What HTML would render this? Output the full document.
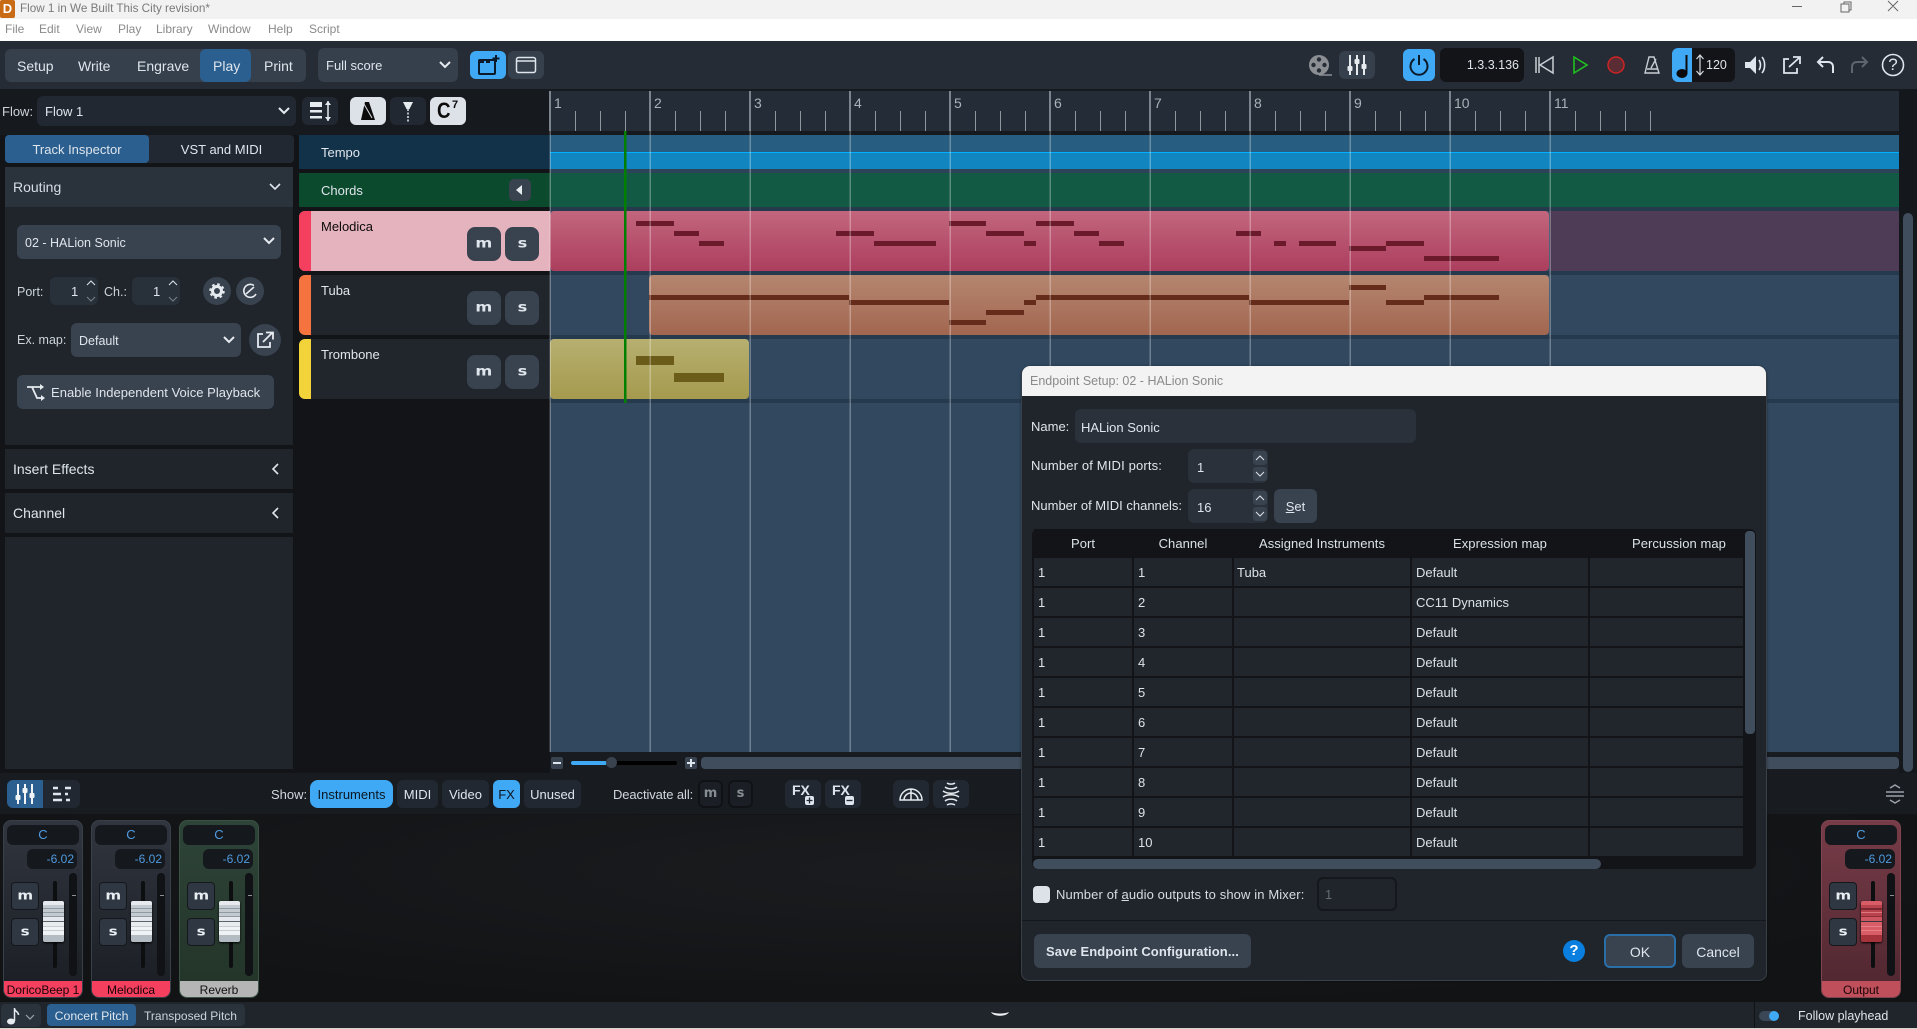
<!DOCTYPE html>
<html><head><meta charset="utf-8"><title>Flow 1</title>
<style>
html,body{margin:0;padding:0;background:#121417;}
body{width:1917px;height:1029px;position:relative;overflow:hidden;font-family:"Liberation Sans",sans-serif;font-size:13px;color:#dfe5ec;}
div,span.a,svg.a{position:absolute;box-sizing:border-box;}
.t{white-space:nowrap;line-height:16px;}
.c{text-align:center;}
.btn{background:#39424f;border-radius:6px;}
.ms{background:#39424f;border-radius:8px;color:#dfe5ec;font:bold 15px/33px "DejaVu Sans",sans-serif;text-align:center;width:34px;height:34px;}
.ms span,.sm span{display:inline-block;transform:scale(1.08,.88);}
.tb{background:#222831;border-radius:6px;height:28px;top:780px;text-align:center;line-height:28px;}
.on{background:#3fa9f5;color:#0c1620;}
.sm{background:#2f3743;border:1px solid #14171b;border-radius:4px;width:28px;height:28px;left:7px;color:#e8edf2;font:bold 14px/27px "DejaVu Sans",sans-serif;text-align:center;}
.cell{background:#20262b;height:28px;line-height:30px;padding-left:4px;overflow:hidden;white-space:nowrap;color:#dbe2e9;}
.hd{background:#121417;height:28px;line-height:30px;text-align:center;top:529px;color:#dbe2e9;letter-spacing:.05px;}
.strip{top:820px;width:80px;height:178px;border-radius:8px;overflow:hidden;border:1px solid #3a4049;}
.thumb{left:39px;top:80px;width:21px;height:41px;border-radius:2px;background:linear-gradient(180deg,#e6eaee 0 4px,#c3cad0 4px 7px,#8f9aa3 7px 8px,#c3cad0 8px 11px,#8f9aa3 11px 12px,#c3cad0 12px 15px,#8f9aa3 15px 16px,#e4e8ec 16px 20px,#5a646d 20px 21px,#e8ecef 21px 25px,#c6ccd2 25px 26px,#f0f3f5 26px 29px,#c6ccd2 29px 30px,#f0f3f5 30px 34px,#b4bcc3 34px 41px);box-shadow:0 1px 2px #000;}
.thumb.r{background:linear-gradient(180deg,#d85d67 0 4px,#b8434d 4px 7px,#7d2730 7px 9px,#b8434d 9px 11px,#e0757d 11px 12px,#b8434d 12px 15px,#8d2c35 15px 16px,#cf5560 16px 20px,#33383d 20px 21px,#d85d67 21px 25px,#e77f87 25px 26px,#d85d67 26px 29px,#e77f87 29px 30px,#d85d67 30px 34px,#a6323c 34px 41px);}
.tick{left:68px;top:74px;width:4px;height:1px;background:#8a9097;}
</style></head><body>

<!-- title + menu -->
<div style="left:0;top:0;width:1917px;height:19px;background:#f2f2f2"></div>
<div style="left:0;top:19px;width:1917px;height:22px;background:#fff"></div>
<div style="left:0;top:0;width:15px;height:18px;background:#c96a14;border-radius:2px;color:#fff;font:bold 13px/18px 'Liberation Sans';text-align:center">D</div>
<div class="t" style="left:20px;top:1px;font-size:11.700px;color:#7a7a7a">Flow 1 in We Built This City revision*</div>
<div class="t" style="left:5px;top:21px;font-size:12px;color:#8a8a8a">File</div>
<div class="t" style="left:39px;top:21px;font-size:12px;color:#8a8a8a">Edit</div>
<div class="t" style="left:76px;top:21px;font-size:12px;color:#8a8a8a">View</div>
<div class="t" style="left:118px;top:21px;font-size:12px;color:#8a8a8a">Play</div>
<div class="t" style="left:156px;top:21px;font-size:12px;color:#8a8a8a">Library</div>
<div class="t" style="left:208px;top:21px;font-size:12px;color:#8a8a8a">Window</div>
<div class="t" style="left:268px;top:21px;font-size:12px;color:#8a8a8a">Help</div>
<div class="t" style="left:309px;top:21px;font-size:12px;color:#8a8a8a">Script</div>
<svg class="a" style="left:1780px;top:0" width="137" height="19" fill="none" stroke="#666"><path d="M12 6.500h10M61 4h8v8h-8zM64 4V2h7v8h-2M108 1l10 10M118 1l-10 10"/></svg>

<!-- top toolbar -->
<div style="left:0;top:41px;width:1917px;height:48px;background:#262c36"></div>
<div style="left:5px;top:49px;width:301px;height:33px;background:#363f4c;border-radius:6px"></div>
<div style="left:200px;top:49px;width:51px;height:33px;background:#2a5f8f;border-radius:6px"></div>
<div class="t" style="left:17px;top:58px;font-size:14px">Setup</div>
<div class="t" style="left:78px;top:58px;font-size:14px">Write</div>
<div class="t" style="left:137px;top:58px;font-size:14px">Engrave</div>
<div class="t" style="left:213px;top:58px;font-size:14px">Play</div>
<div class="t" style="left:264px;top:58px;font-size:14px">Print</div>
<div style="left:318px;top:48px;width:140px;height:34px;background:#363f4c;border-radius:6px"></div>
<div class="t" style="left:326px;top:58px">Full score</div>
<svg class="a" style="left:438px;top:60px" width="14" height="10" fill="none" stroke="#e6ebf0" stroke-width="2"><path d="M2 2l5 5 5-5"/></svg>
<div style="left:470px;top:51px;width:36px;height:28px;background:#3fa9f5;border-radius:6px"></div>
<svg class="a" style="left:476px;top:54px" width="26" height="22" fill="none" stroke="#0b1a2a" stroke-width="2"><rect x="3" y="6" width="16" height="14" rx="1"/><rect x="3" y="5" width="5" height="4" fill="#0b1a2a" stroke="none"/><rect x="10" y="5" width="4" height="4" fill="#0b1a2a" stroke="none"/><path d="M20 1v7M16.500 4.500h7"/></svg>
<div style="left:508px;top:51px;width:36px;height:28px;background:#363f4c;border-radius:6px"></div>
<svg class="a" style="left:515px;top:56px" width="22" height="18" fill="none" stroke="#dfe5ec" stroke-width="1.500"><rect x="1.500" y="1.500" width="19" height="15" rx="2"/><path d="M2 5h18"/></svg>

<svg class="a" style="left:1305px;top:52px" width="30" height="26"><circle cx="14" cy="13" r="10" fill="#8b8f94"/><g fill="#262c36"><circle cx="14" cy="7.500" r="2.200"/><circle cx="14" cy="18.500" r="2.200"/><circle cx="8.500" cy="13" r="2.200"/><circle cx="19.500" cy="13" r="2.200"/></g><path d="M14 23h13" stroke="#8b8f94" stroke-width="1.500"/></svg>
<div style="left:1339px;top:51px;width:36px;height:28px;background:#363f4c;border-radius:6px"></div>
<svg class="a" style="left:1346px;top:54px" width="22" height="22" fill="none" stroke="#e6ebf0" stroke-width="2"><path d="M4 1v20M11 1v20M18 1v20"/><g fill="#e6ebf0" stroke="none"><rect x="1.500" y="12" width="5" height="5" rx="1"/><rect x="8.500" y="5" width="5" height="5" rx="1"/><rect x="15.500" y="10" width="5" height="5" rx="1"/></g></svg>
<div style="left:1403px;top:49px;width:32px;height:32px;background:#3fa9f5;border-radius:6px"></div>
<svg class="a" style="left:1408px;top:54px" width="22" height="22" fill="none" stroke="#0b1a2a" stroke-width="2"><path d="M6.500 5a8.500 8.500 0 1 0 9 0M11 1v10"/></svg>
<div style="left:1440px;top:48px;width:84px;height:34px;background:#121417;border-radius:6px"></div>
<div class="t" style="left:1440px;top:57px;width:79px;text-align:right;font-size:12.500px">1.3.3.136</div>
<svg class="a" style="left:1534px;top:54px" width="22" height="22" fill="none" stroke="#c9ced4" stroke-width="1.500"><path d="M2 3v16M5 3v16M19 3L6 11l13 8z"/></svg>
<svg class="a" style="left:1572px;top:54px" width="18" height="22" fill="none" stroke="#1fc01f" stroke-width="1.600"><path d="M2 3l13 8-13 8z"/></svg>
<svg class="a" style="left:1606px;top:55px" width="20" height="20"><circle cx="10" cy="10" r="8" fill="#5a2c33" stroke="#d02424" stroke-width="1.500"/></svg>
<svg class="a" style="left:1643px;top:55px" width="20" height="20" fill="none" stroke="#c9ced4" stroke-width="1.400"><path d="M6 2h5l5 16H2zM4 14h11M8 13L13 4"/></svg>
<div style="left:1672px;top:48px;width:63px;height:34px;background:#121417;border-radius:6px"></div>
<div style="left:1672px;top:48px;width:20px;height:34px;background:#3fa9f5;border-radius:6px 0 0 6px"></div>
<svg class="a" style="left:1675px;top:52px" width="16" height="28"><ellipse cx="7" cy="21.500" rx="5.500" ry="4.500" fill="#0b0b0b"/><path d="M11.500 21V3" stroke="#0b0b0b" stroke-width="2"/></svg>
<svg class="a" style="left:1694px;top:54px" width="12" height="22" fill="none" stroke="#d6dbe0" stroke-width="1.200"><path d="M6 1v20M2.500 5L6 1l3.500 4M2.500 17L6 21l3.500-4"/></svg>
<div class="t" style="left:1706px;top:57px;font-size:12.500px">120</div>
<svg class="a" style="left:1743px;top:53px" width="24" height="24"><path d="M2 9h5l6-6v18l-6-6H2z" fill="#dfe5ec"/><path d="M16 7c2 3 2 7 0 10M19 4c3.500 4 3.500 12 0 16" fill="none" stroke="#dfe5ec" stroke-width="1.600"/></svg>
<svg class="a" style="left:1782px;top:55px" width="20" height="20" fill="none" stroke="#dfe5ec" stroke-width="1.800"><path d="M7 4H2v14h13v-5M7 12L17 3M11 2h7v7"/></svg>
<svg class="a" style="left:1816px;top:56px" width="20" height="18" fill="none" stroke="#dfe5ec" stroke-width="2"><path d="M7 1L2 6l5 5M2 6h10c3 0 5 2 5 5v6"/></svg>
<svg class="a" style="left:1849px;top:56px" width="20" height="18" fill="none" stroke="#5d6670" stroke-width="2"><path d="M13 1l5 5-5 5M18 6H8c-3 0-5 2-5 5v6"/></svg>
<svg class="a" style="left:1881px;top:53px" width="24" height="24" fill="none" stroke="#dfe5ec" stroke-width="1.600"><circle cx="12" cy="12" r="10.500"/></svg>
<div class="t c" style="left:1881px;top:57px;width:24px;font-size:17px">?</div>

<!-- second row -->
<div style="left:0;top:89px;width:1917px;height:46px;background:#16191e"></div>
<div class="t" style="left:2px;top:104px;color:#ccd3da">Flow:</div>
<div style="left:37px;top:96px;width:259px;height:30px;background:#222831;border-radius:6px"></div>
<div class="t" style="left:45px;top:104px">Flow 1</div>
<svg class="a" style="left:277px;top:106px" width="14" height="10" fill="none" stroke="#e6ebf0" stroke-width="2"><path d="M2 2l5 5 5-5"/></svg>
<div style="left:302px;top:97px;width:36px;height:28px;background:#222831;border-radius:6px"></div>
<svg class="a" style="left:308px;top:100px" width="26" height="22" fill="#e6ebf0"><rect x="2" y="2" width="12" height="5"/><rect x="2" y="10" width="12" height="2.500"/><rect x="2" y="16" width="12" height="2.500"/><path d="M20 1v20" stroke="#e6ebf0" stroke-width="1.500"/><path d="M17 5l3-4 3 4zM17 17l3 4 3-4z"/></svg>
<div style="left:350px;top:97px;width:36px;height:28px;background:#dde1e8;border-radius:6px"></div>
<svg class="a" style="left:359px;top:101px" width="18" height="20"><path d="M6 1h4l6 18H2z" fill="#0b0b0b"/><path d="M5 3l8 14" stroke="#dde1e8" stroke-width="1"/></svg>
<div style="left:390px;top:97px;width:36px;height:28px;background:#222831;border-radius:6px"></div>
<svg class="a" style="left:400px;top:100px" width="16" height="22"><path d="M3 2h10L9.500 9h-3z" fill="#e6ebf0"/><path d="M8 9v13" stroke="#e6ebf0" stroke-width="1.500" stroke-dasharray="2 1.500"/></svg>
<div style="left:430px;top:97px;width:36px;height:28px;background:#dde1e8;border-radius:6px"></div>
<div class="t" style="left:437px;top:99px;font-size:22px;line-height:24px;color:#0b0b0b;font-weight:bold;transform-origin:left;transform:scaleX(.85)">C</div>
<div class="t" style="left:452px;top:99px;font-size:11px;line-height:12px;color:#0b0b0b;font-weight:bold">7</div>

<!-- inspector -->
<div style="left:5px;top:135px;width:289px;height:28px;background:#222831;border-radius:4px"></div>
<div style="left:5px;top:135px;width:144px;height:28px;background:#2a5f8f;border-radius:4px"></div>
<div class="t c" style="left:5px;top:142px;width:144px">Track Inspector</div>
<div class="t c" style="left:149px;top:142px;width:145px">VST and MIDI</div>
<div style="left:5px;top:167px;width:288px;height:40px;background:#2a323c"></div>
<div class="t" style="left:13px;top:179px;font-size:14px;color:#d6dde4">Routing</div>
<svg class="a" style="left:268px;top:182px" width="14" height="10" fill="none" stroke="#dfe5ec" stroke-width="1.600"><path d="M2 2l5 5 5-5"/></svg>
<div style="left:5px;top:207px;width:288px;height:238px;background:#1f252b"></div>
<div style="left:17px;top:225px;width:264px;height:34px;background:#39424f;border-radius:6px"></div>
<div class="t" style="left:25px;top:235px;font-size:12.500px">02 - HALion Sonic</div>
<svg class="a" style="left:262px;top:236px" width="14" height="10" fill="none" stroke="#e6ebf0" stroke-width="2"><path d="M2 2l5 5 5-5"/></svg>

<div class="t" style="left:17px;top:284px;font-size:12.500px;color:#ccd3da">Port:</div>
<div style="left:50px;top:277px;width:48px;height:28px;background:#28303a;border-radius:6px"></div>
<div class="t" style="left:71px;top:284px;font-size:13px">1</div>
<svg class="a" style="left:85px;top:278px" width="12" height="26" fill="none" stroke="#dfe5ec"><path d="M2 7l4-4 4 4"/><path d="M2 19l4 4 4-4" stroke="#79828c"/></svg>
<div class="t" style="left:104px;top:284px;font-size:12.500px;color:#ccd3da">Ch.:</div>
<div style="left:132px;top:277px;width:48px;height:28px;background:#28303a;border-radius:6px"></div>
<div class="t" style="left:153px;top:284px;font-size:13px">1</div>
<svg class="a" style="left:167px;top:278px" width="12" height="26" fill="none" stroke="#dfe5ec"><path d="M2 7l4-4 4 4"/><path d="M2 19l4 4 4-4" stroke="#79828c"/></svg>
<div style="left:203px;top:277px;width:28px;height:28px;background:#39424f;border-radius:50%"></div>
<svg class="a" style="left:209px;top:283px" width="16" height="16"><circle cx="8" cy="8" r="4.500" fill="none" stroke="#e6ebf0" stroke-width="3"/><circle cx="8" cy="8" r="6.500" fill="none" stroke="#e6ebf0" stroke-width="2.500" stroke-dasharray="2.500 2.600"/></svg>
<div style="left:236px;top:277px;width:28px;height:28px;background:#39424f;border-radius:50%"></div>
<svg class="a" style="left:242px;top:283px" width="16" height="16" fill="none" stroke="#e6ebf0" stroke-width="1.600"><path d="M14 11a6.500 6.500 0 1 1-2-8.500M4 11l8-7"/></svg>

<div class="t" style="left:17px;top:332px;font-size:12.500px;color:#ccd3da">Ex. map:</div>
<div style="left:71px;top:323px;width:170px;height:34px;background:#39424f;border-radius:6px"></div>
<div class="t" style="left:79px;top:333px;font-size:12.500px">Default</div>
<svg class="a" style="left:222px;top:335px" width="14" height="10" fill="none" stroke="#e6ebf0" stroke-width="2"><path d="M2 2l5 5 5-5"/></svg>
<div style="left:249px;top:324px;width:32px;height:32px;background:#39424f;border-radius:50%"></div>
<svg class="a" style="left:256px;top:331px" width="18" height="18" fill="none" stroke="#e6ebf0" stroke-width="1.800"><path d="M7 3H2v13h12v-5M7 11l9-9M10 1.500h7v7"/></svg>

<div style="left:17px;top:375px;width:257px;height:34px;background:#39424f;border-radius:6px"></div>
<svg class="a" style="left:26px;top:384px" width="20" height="18" fill="none" stroke="#e6ebf0" stroke-width="1.800"><path d="M1 3h14M6 3l5 11h5"/><path d="M14 0l4 3-4 3zM15 11l4 3-4 3z" fill="#e6ebf0" stroke="none"/></svg>
<div class="t" style="left:51px;top:385px;letter-spacing:.03px">Enable Independent Voice Playback</div>

<div style="left:5px;top:449px;width:288px;height:40px;background:#1f252b"></div>
<div class="t" style="left:13px;top:461px;font-size:14px">Insert Effects</div>
<svg class="a" style="left:270px;top:462px" width="10" height="14" fill="none" stroke="#dfe5ec" stroke-width="1.600"><path d="M8 2L3 7l5 5"/></svg>
<div style="left:5px;top:493px;width:288px;height:40px;background:#1f252b"></div>
<div class="t" style="left:13px;top:505px;font-size:14px">Channel</div>
<svg class="a" style="left:270px;top:506px" width="10" height="14" fill="none" stroke="#dfe5ec" stroke-width="1.600"><path d="M8 2L3 7l5 5"/></svg>
<div style="left:5px;top:537px;width:288px;height:232px;background:#1f252b"></div>

<!-- track headers -->
<div style="left:299px;top:135px;width:251px;height:34px;background:#12324a"></div>
<div class="t" style="left:321px;top:145px">Tempo</div>
<div style="left:299px;top:173px;width:251px;height:34px;background:#0c4a2e"></div>
<div class="t" style="left:321px;top:183px">Chords</div>
<div style="left:509px;top:179px;width:22px;height:22px;background:#39424f;border-radius:5px"></div>
<svg class="a" style="left:514px;top:184px" width="10" height="12" fill="#e6ebf0"><path d="M8 1L2 6l6 5z"/></svg>

<div style="left:299px;top:211px;width:251px;height:60px;background:#e5b3bd;border-radius:6px 0 0 6px;overflow:hidden"><div style="left:0;top:0;width:12px;height:60px;background:#f43f5e"></div></div>
<div class="t" style="left:321px;top:219px;color:#0a0a0a">Melodica</div>
<div class="ms" style="left:467px;top:227px"><span>m</span></div><div class="ms" style="left:505px;top:227px"><span>s</span></div>
<div style="left:299px;top:275px;width:251px;height:60px;background:#20262c;border-radius:6px 0 0 6px;overflow:hidden"><div style="left:0;top:0;width:12px;height:60px;background:#f4733f"></div></div>
<div class="t" style="left:321px;top:283px">Tuba</div>
<div class="ms" style="left:467px;top:291px"><span>m</span></div><div class="ms" style="left:505px;top:291px"><span>s</span></div>
<div style="left:299px;top:339px;width:251px;height:60px;background:#20262c;border-radius:6px 0 0 6px;overflow:hidden"><div style="left:0;top:0;width:12px;height:60px;background:#f2d43a"></div></div>
<div class="t" style="left:321px;top:347px">Trombone</div>
<div class="ms" style="left:467px;top:355px"><span>m</span></div><div class="ms" style="left:505px;top:355px"><span>s</span></div>

<!-- timeline -->
<svg class="a" style="left:0;top:0" width="1917" height="1029" font-family="Liberation Sans" pointer-events="none">
<defs>
<linearGradient id="gm" x1="0" y1="0" x2="0" y2="1"><stop offset="0" stop-color="#c2667d"/><stop offset="1" stop-color="#ac3e5e"/></linearGradient>
<linearGradient id="gt" x1="0" y1="0" x2="0" y2="1"><stop offset="0" stop-color="#b5866f"/><stop offset="1" stop-color="#a26650"/></linearGradient>
<linearGradient id="gy" x1="0" y1="0" x2="0" y2="1"><stop offset="0" stop-color="#b6af70"/><stop offset="1" stop-color="#a59a4e"/></linearGradient>
</defs>
<rect x="550" y="91" width="1349" height="40" fill="#232c37"/>
<rect x="550" y="135" width="1349" height="617" fill="#31485f"/>
<rect x="550" y="135" width="1349" height="17" fill="#275d80"/>
<rect x="550" y="153" width="1349" height="16" fill="#1185c0"/>
<rect x="550" y="152" width="1349" height="1" fill="#00b0ff"/>
<rect x="550" y="169" width="1349" height="4" fill="#2c4358"/>
<rect x="550" y="173" width="1349" height="34" fill="#135a45"/>
<rect x="550" y="207" width="1349" height="4" fill="#263a4e"/>
<rect x="1550" y="211" width="349" height="60" fill="#4e3c57"/>
<rect x="550" y="271" width="1349" height="4" fill="#263a4e"/>
<rect x="550" y="335" width="1349" height="4" fill="#263a4e"/>
<rect x="550" y="399" width="1349" height="4" fill="#263a4e"/>
<rect x="550" y="211" width="999" height="60" rx="4" fill="url(#gm)"/>
<rect x="649" y="275" width="900" height="60" rx="4" fill="url(#gt)"/>
<rect x="550" y="339" width="199" height="60" rx="4" fill="url(#gy)"/>
<g fill="#6b1a2c">
<rect x="636" y="221" width="38" height="5"/><rect x="674" y="231" width="25" height="5"/><rect x="699" y="241" width="25" height="5"/><rect x="836" y="231" width="38" height="5"/><rect x="874" y="241" width="62" height="5"/><rect x="949" y="221" width="37" height="5"/><rect x="986" y="231" width="38" height="5"/><rect x="1024" y="241" width="12" height="5"/><rect x="1036" y="221" width="38" height="5"/><rect x="1074" y="231" width="25" height="5"/><rect x="1099" y="241" width="25" height="5"/><rect x="1236" y="231" width="25" height="5"/><rect x="1274" y="241" width="12" height="5"/><rect x="1299" y="241" width="37" height="5"/><rect x="1349" y="246" width="37" height="5"/><rect x="1386" y="241" width="38" height="5"/><rect x="1424" y="256" width="75" height="5"/>
</g>
<g fill="#652c1b">
<rect x="649" y="295" width="200" height="5"/><rect x="849" y="300" width="100" height="5"/><rect x="949" y="320" width="37" height="5"/><rect x="986" y="310" width="38" height="5"/><rect x="1024" y="300" width="12" height="5"/><rect x="1036" y="295" width="213" height="5"/><rect x="1249" y="300" width="100" height="5"/><rect x="1349" y="285" width="37" height="5"/><rect x="1386" y="300" width="38" height="5"/><rect x="1424" y="295" width="75" height="5"/>
</g>
<g fill="#6b5c1a"><rect x="636" y="356" width="38" height="9"/><rect x="674" y="373" width="50" height="9"/></g>
<g fill="#fff" fill-opacity=".3">
<rect x="549.500" y="131" width="1.500" height="621"/><rect x="649.500" y="131" width="1.500" height="621"/><rect x="749.500" y="131" width="1.500" height="621"/><rect x="849.500" y="131" width="1.500" height="621"/><rect x="949.500" y="131" width="1.500" height="621"/><rect x="1049.500" y="131" width="1.500" height="621"/><rect x="1149.500" y="131" width="1.500" height="621"/><rect x="1249.500" y="131" width="1.500" height="621"/><rect x="1349.500" y="131" width="1.500" height="621"/><rect x="1449.500" y="131" width="1.500" height="621"/><rect x="1549.500" y="131" width="1.500" height="621"/>
</g>
<g fill="#7c848d">
<rect x="549" y="91" width="2" height="40"/><rect x="649" y="91" width="2" height="40"/><rect x="749" y="91" width="2" height="40"/><rect x="849" y="91" width="2" height="40"/><rect x="949" y="91" width="2" height="40"/><rect x="1049" y="91" width="2" height="40"/><rect x="1149" y="91" width="2" height="40"/><rect x="1249" y="91" width="2" height="40"/><rect x="1349" y="91" width="2" height="40"/><rect x="1449" y="91" width="2" height="40"/><rect x="1549" y="91" width="2" height="40"/>
</g>
<path stroke="#8f969e" d="M575.500 111v20M600.500 111v20M625.500 111v20M675.500 111v20M700.500 111v20M725.500 111v20M775.500 111v20M800.500 111v20M825.500 111v20M875.500 111v20M900.500 111v20M925.500 111v20M975.500 111v20M1000.500 111v20M1025.500 111v20M1075.500 111v20M1100.500 111v20M1125.500 111v20M1175.500 111v20M1200.500 111v20M1225.500 111v20M1275.500 111v20M1300.500 111v20M1325.500 111v20M1375.500 111v20M1400.500 111v20M1425.500 111v20M1475.500 111v20M1500.500 111v20M1525.500 111v20M1575.500 111v20M1600.500 111v20M1625.500 111v20M1650.500 111v20"/>
<g fill="#aab1b8" font-size="14">
<text x="554" y="108">1</text><text x="654" y="108">2</text><text x="754" y="108">3</text><text x="854" y="108">4</text><text x="954" y="108">5</text><text x="1054" y="108">6</text><text x="1154" y="108">7</text><text x="1254" y="108">8</text><text x="1354" y="108">9</text><text x="1454" y="108">10</text><text x="1554" y="108">11</text>
</g>
<rect x="624" y="131" width="2.500" height="272" fill="#008000"/>
</svg>

<!-- right + bottom scrollbars -->
<div style="left:1899px;top:89px;width:18px;height:684px;background:#14171b"></div>
<div style="left:1903px;top:213px;width:10px;height:559px;background:#3f4d5c;border-radius:5px"></div>
<div style="left:550px;top:752px;width:1349px;height:21px;background:#181c21"></div>
<div style="left:701px;top:757px;width:1198px;height:12px;background:#3f4d5c;border-radius:4px"></div>
<div style="left:551px;top:757px;width:12px;height:12px;background:#39424f;border-radius:2px"></div>
<div style="left:553px;top:762px;width:8px;height:2px;background:#dfe5ec"></div>
<div style="left:571px;top:761px;width:106px;height:4px;background:#000;border-radius:2px"></div>
<div style="left:571px;top:761px;width:36px;height:4px;background:#3fa9f5;border-radius:2px"></div>
<div style="left:606px;top:757px;width:11px;height:11px;background:#39424f;border-radius:50%"></div>
<div style="left:685px;top:757px;width:12px;height:12px;background:#39424f;border-radius:2px"></div>
<div style="left:687px;top:762px;width:8px;height:2px;background:#dfe5ec"></div><div style="left:690px;top:759px;width:2px;height:8px;background:#dfe5ec"></div>

<!-- mixer toolbar -->
<div style="left:0;top:773px;width:1917px;height:41px;background:#181c21"></div>
<div class="tb" style="left:7px;width:73px"></div>
<div style="left:7px;top:780px;width:36px;height:28px;background:#2a5f8f;border-radius:6px 0 0 6px"></div>
<svg class="a" style="left:14px;top:783px" width="24" height="22" fill="none" stroke="#f1f4f7" stroke-width="2"><path d="M4 1v20M11 1v20M18 1v20"/><g fill="#f1f4f7" stroke="none"><rect x="1.500" y="12" width="5" height="5" rx="1"/><rect x="8.500" y="5" width="5" height="5" rx="1"/><rect x="15.500" y="10" width="5" height="5" rx="1"/></g></svg>
<svg class="a" style="left:52px;top:785px" width="20" height="18" stroke="#dfe5ec" stroke-width="2.500"><path d="M1 3h5M13 3h6M1 9h8M13 9h3M1 15h9M14 15h4"/></svg>
<div class="t" style="left:271px;top:787px;color:#d0d7de">Show:</div>
<div class="tb on" style="left:310px;width:83px;border-radius:8px;line-height:29px">Instruments</div>
<div class="tb" style="left:397px;width:41px;line-height:29px">MIDI</div>
<div class="tb" style="left:442px;width:47px;line-height:29px">Video</div>
<div class="tb on" style="left:493px;width:27px;line-height:29px">FX</div>
<div class="tb" style="left:524px;width:57px;line-height:29px">Unused</div>
<div class="t" style="left:613px;top:787px;color:#d0d7de;letter-spacing:-.1px">Deactivate all:</div>
<div class="tb" style="left:698px;width:25px;background:#1b1f25;border:2px solid #101215;color:#868d95;font:bold 13px/23px 'DejaVu Sans'">m</div>
<div class="tb" style="left:728px;width:25px;background:#1b1f25;border:2px solid #101215;color:#868d95;font:bold 13px/23px 'DejaVu Sans'">s</div>
<div class="tb" style="left:785px;width:36px"></div>
<div class="t" style="left:792px;top:782px;font:bold 14px/16px 'Liberation Sans'">FX</div>
<div style="left:805px;top:796px;width:9px;height:9px;background:#dfe5ec;border-radius:2px"></div>
<svg class="a" style="left:805px;top:796px" width="9" height="9" stroke="#222831" stroke-width="1.300"><path d="M1.500 4.500h6M4.500 1.500v6"/></svg>
<div class="tb" style="left:825px;width:36px"></div>
<div class="t" style="left:832px;top:782px;font:bold 14px/16px 'Liberation Sans'">FX</div>
<div style="left:845px;top:796px;width:9px;height:9px;background:#dfe5ec;border-radius:2px"></div>
<svg class="a" style="left:845px;top:796px" width="9" height="9" stroke="#222831" stroke-width="1.300"><path d="M1.500 4.500h6"/></svg>
<div class="tb" style="left:893px;width:36px"></div>
<svg class="a" style="left:899px;top:785px" width="24" height="17" fill="none" stroke="#e6ebf0" stroke-width="1.500"><path d="M1 15a11 11 0 0 1 22 0zM5 15a7 7 0 0 1 14 0M12 4v11"/></svg>
<div class="tb" style="left:933px;width:36px"></div>
<svg class="a" style="left:941px;top:781px" width="20" height="26" fill="none" stroke="#e6ebf0" stroke-width="1.500"><path d="M6 2c2 1.500 6 1.500 8 0M4 6c3 2.500 9 2.500 12 0M2 10c4 3 12 3 16 0M2 16c4-3 12-3 16 0M4 20c3-2.500 9-2.500 12 0M6 24c2-1.500 6-1.500 8 0"/></svg>
<svg class="a" style="left:1884px;top:783px" width="22" height="22" fill="none" stroke="#9aa1a9" stroke-width="1.500"><path d="M6 5l5-3 5 3M2 9h18M2 13h18M6 17l5 3 5-3"/></svg>

<!-- mixer area -->
<div style="left:0;top:815px;width:1917px;height:187px;background:radial-gradient(ellipse at 50% 30%,#1a1c1f 0%,#111315 75%)"></div>
<div class="strip" style="left:3px;background:linear-gradient(180deg,#30353f,#1a1e23)">
<div style="left:3px;top:4px;width:72px;height:20px;background:#15181c;border-radius:6px;color:#4f9be0;text-align:center;line-height:20px">C</div>
<div style="left:23px;top:28px;width:50px;height:20px;background:#15181c;border-radius:6px;color:#4f9be0;text-align:right;line-height:20px;padding-right:3px;font-size:12px">-6.02</div>
<div class="sm" style="top:61px"><span>m</span></div><div class="sm" style="top:97px"><span>s</span></div>
<div style="left:49px;top:60px;width:4px;height:87px;background:#0c0e10;border-radius:2px"></div>
<div class="thumb"></div>
<div style="left:65px;top:52px;width:8px;height:103px;background:#101215;border-radius:4px"></div><div class="tick"></div>
<div style="left:0;top:160px;width:78px;height:17px;background:#f43f5e;color:#1a0508;text-align:center;font-size:12px;line-height:18px">DoricoBeep 1</div>
</div>
<div class="strip" style="left:91px;background:linear-gradient(180deg,#30353f,#1a1e23)">
<div style="left:3px;top:4px;width:72px;height:20px;background:#15181c;border-radius:6px;color:#4f9be0;text-align:center;line-height:20px">C</div>
<div style="left:23px;top:28px;width:50px;height:20px;background:#15181c;border-radius:6px;color:#4f9be0;text-align:right;line-height:20px;padding-right:3px;font-size:12px">-6.02</div>
<div class="sm" style="top:61px"><span>m</span></div><div class="sm" style="top:97px"><span>s</span></div>
<div style="left:49px;top:60px;width:4px;height:87px;background:#0c0e10;border-radius:2px"></div>
<div class="thumb"></div>
<div style="left:65px;top:52px;width:8px;height:103px;background:#101215;border-radius:4px"></div><div class="tick"></div>
<div style="left:0;top:160px;width:78px;height:17px;background:#f43f5e;color:#1a0508;text-align:center;font-size:12px;line-height:18px">Melodica</div>
</div>
<div class="strip" style="left:179px;background:linear-gradient(180deg,#2e4438,#233328);border-color:#3a5244">
<div style="left:3px;top:4px;width:72px;height:20px;background:#15181c;border-radius:6px;color:#4f9be0;text-align:center;line-height:20px">C</div>
<div style="left:23px;top:28px;width:50px;height:20px;background:#15181c;border-radius:6px;color:#4f9be0;text-align:right;line-height:20px;padding-right:3px;font-size:12px">-6.02</div>
<div class="sm" style="top:61px"><span>m</span></div><div class="sm" style="top:97px"><span>s</span></div>
<div style="left:49px;top:60px;width:4px;height:87px;background:#0c0e10;border-radius:2px"></div>
<div class="thumb"></div>
<div style="left:65px;top:52px;width:8px;height:103px;background:#101215;border-radius:4px"></div><div class="tick"></div>
<div style="left:0;top:160px;width:78px;height:17px;background:#b5b5b5;color:#111;text-align:center;font-size:12px;line-height:18px">Reverb</div>
</div>
<div class="strip" style="left:1821px;background:linear-gradient(180deg,#773c48,#4e262f);border-color:#7f4450">
<div style="left:3px;top:4px;width:72px;height:20px;background:#15181c;border-radius:6px;color:#4f9be0;text-align:center;line-height:20px">C</div>
<div style="left:23px;top:28px;width:50px;height:20px;background:#15181c;border-radius:6px;color:#4f9be0;text-align:right;line-height:20px;padding-right:3px;font-size:12px">-6.02</div>
<div class="sm" style="top:61px"><span>m</span></div><div class="sm" style="top:97px"><span>s</span></div>
<div style="left:49px;top:60px;width:4px;height:87px;background:#0c0e10;border-radius:2px"></div>
<div class="thumb r"></div>
<div style="left:65px;top:52px;width:8px;height:103px;background:#101215;border-radius:4px"></div><div class="tick"></div>
<div style="left:0;top:160px;width:78px;height:17px;background:#bf4f5a;color:#1a0508;text-align:center;font-size:12px;line-height:18px">Output</div>
</div>

<!-- status bar -->
<div style="left:0;top:1002px;width:1917px;height:26px;background:#1f252b"></div>
<div style="left:0;top:1028px;width:1917px;height:1px;background:#d8d6c8"></div>
<div style="left:1px;top:1004px;width:40px;height:23px;background:#2a323c;border-radius:4px"></div>
<svg class="a" style="left:5px;top:1006px" width="30" height="20"><ellipse cx="6" cy="15.500" rx="4" ry="3" fill="#e6ebf0"/><path d="M9.500 15V2c0 4 4 3 4 7" fill="none" stroke="#e6ebf0" stroke-width="1.500"/><path d="M21 9l4 4 4-4" fill="none" stroke="#9aa1a9" stroke-width="1.200"/></svg>
<div style="left:47px;top:1004px;width:198px;height:22px;background:#2a323c;border-radius:4px"></div>
<div style="left:47px;top:1004px;width:89px;height:22px;background:#2a5f8f;border-radius:4px"></div>
<div class="t c" style="left:47px;top:1008px;width:89px;font-size:12.300px">Concert Pitch</div>
<div class="t c" style="left:136px;top:1008px;width:109px;font-size:12px;color:#ccd3da">Transposed Pitch</div>
<svg class="a" style="left:990px;top:1010px" width="20" height="10"><path d="M1 2c4 2 14 2 18 0c-2 5-16 5-18 0z" fill="#eef1f4"/></svg>
<div style="left:1754px;top:1002px;width:1px;height:26px;background:#101215"></div>
<div style="left:1759px;top:1011px;width:20px;height:10px;background:#3a4756;border-radius:5px"></div>
<div style="left:1769px;top:1011px;width:10px;height:10px;background:#3fa9f5;border-radius:50%"></div>
<div class="t" style="left:1798px;top:1008px;font-size:12.500px">Follow playhead</div>

<!-- dialog -->
<div style="left:1021px;top:366px;width:746px;height:615px;background:#1f252a;border:1px solid #3a4047;border-top:0;border-radius:10px 10px 8px 8px;overflow:hidden;box-shadow:0 0 2px #0006"></div>
<div style="left:1022px;top:366px;width:744px;height:30px;background:#f3f3f3;border-radius:8px 8px 0 0"></div>
<div class="t" style="left:1030px;top:373px;font-size:12.500px;color:#8a8a8a">Endpoint Setup: 02 - HALion Sonic</div>
<div class="t" style="left:1031px;top:419px">Name:</div>
<div style="left:1075px;top:409px;width:341px;height:34px;background:#2a313b;border-radius:6px"></div>
<div class="t" style="left:1081px;top:420px">HALion Sonic</div>
<div class="t" style="left:1031px;top:458px;letter-spacing:.15px">Number of MIDI ports:</div>
<div style="left:1188px;top:449px;width:80px;height:34px;background:#2a313b;border-radius:6px"></div>
<div class="t" style="left:1197px;top:460px">1</div>
<svg class="a" style="left:1253px;top:451px" width="14" height="30"><rect width="14" height="14" rx="3" fill="#39424f"/><rect y="16" width="14" height="14" rx="3" fill="#39424f"/><path d="M3 9l4-4 4 4M3 21l4 4 4-4" fill="none" stroke="#dfe5ec"/></svg>
<div class="t" style="left:1031px;top:498px">Number of MIDI channels:</div>
<div style="left:1188px;top:489px;width:80px;height:34px;background:#2a313b;border-radius:6px"></div>
<div class="t" style="left:1197px;top:500px">16</div>
<svg class="a" style="left:1253px;top:491px" width="14" height="30"><rect width="14" height="14" rx="3" fill="#39424f"/><rect y="16" width="14" height="14" rx="3" fill="#39424f"/><path d="M3 9l4-4 4 4M3 21l4 4 4-4" fill="none" stroke="#dfe5ec"/></svg>
<div class="btn t c" style="left:1274px;top:489px;width:43px;height:34px;line-height:36px"><u style="text-decoration-thickness:1px">S</u>et</div>

<!-- table -->
<div style="left:1032px;top:529px;width:724px;height:340px;background:#121417;border-radius:6px"></div>
<div class="hd" style="left:1034px;width:98px">Port</div>
<div class="hd" style="left:1134px;width:98px">Channel</div>
<div class="hd" style="left:1234px;width:176px">Assigned Instruments</div>
<div class="hd" style="left:1412px;width:176px">Expression map</div>
<div class="hd" style="left:1590px;width:153px;text-align:left;padding-left:42px">Percussion map</div>

<div class="cell" style="left:1034px;top:558px;width:98px">1</div><div class="cell" style="left:1134px;top:558px;width:98px">1</div><div class="cell" style="left:1234px;top:558px;width:176px;padding-left:3px">Tuba</div><div class="cell" style="left:1412px;top:558px;width:176px">Default</div><div class="cell" style="left:1590px;top:558px;width:153px"></div>
<div class="cell" style="left:1034px;top:588px;width:98px">1</div><div class="cell" style="left:1134px;top:588px;width:98px">2</div><div class="cell" style="left:1234px;top:588px;width:176px"></div><div class="cell" style="left:1412px;top:588px;width:176px">CC11 Dynamics</div><div class="cell" style="left:1590px;top:588px;width:153px"></div>
<div class="cell" style="left:1034px;top:618px;width:98px">1</div><div class="cell" style="left:1134px;top:618px;width:98px">3</div><div class="cell" style="left:1234px;top:618px;width:176px"></div><div class="cell" style="left:1412px;top:618px;width:176px">Default</div><div class="cell" style="left:1590px;top:618px;width:153px"></div>
<div class="cell" style="left:1034px;top:648px;width:98px">1</div><div class="cell" style="left:1134px;top:648px;width:98px">4</div><div class="cell" style="left:1234px;top:648px;width:176px"></div><div class="cell" style="left:1412px;top:648px;width:176px">Default</div><div class="cell" style="left:1590px;top:648px;width:153px"></div>
<div class="cell" style="left:1034px;top:678px;width:98px">1</div><div class="cell" style="left:1134px;top:678px;width:98px">5</div><div class="cell" style="left:1234px;top:678px;width:176px"></div><div class="cell" style="left:1412px;top:678px;width:176px">Default</div><div class="cell" style="left:1590px;top:678px;width:153px"></div>
<div class="cell" style="left:1034px;top:708px;width:98px">1</div><div class="cell" style="left:1134px;top:708px;width:98px">6</div><div class="cell" style="left:1234px;top:708px;width:176px"></div><div class="cell" style="left:1412px;top:708px;width:176px">Default</div><div class="cell" style="left:1590px;top:708px;width:153px"></div>
<div class="cell" style="left:1034px;top:738px;width:98px">1</div><div class="cell" style="left:1134px;top:738px;width:98px">7</div><div class="cell" style="left:1234px;top:738px;width:176px"></div><div class="cell" style="left:1412px;top:738px;width:176px">Default</div><div class="cell" style="left:1590px;top:738px;width:153px"></div>
<div class="cell" style="left:1034px;top:768px;width:98px">1</div><div class="cell" style="left:1134px;top:768px;width:98px">8</div><div class="cell" style="left:1234px;top:768px;width:176px"></div><div class="cell" style="left:1412px;top:768px;width:176px">Default</div><div class="cell" style="left:1590px;top:768px;width:153px"></div>
<div class="cell" style="left:1034px;top:798px;width:98px">1</div><div class="cell" style="left:1134px;top:798px;width:98px">9</div><div class="cell" style="left:1234px;top:798px;width:176px"></div><div class="cell" style="left:1412px;top:798px;width:176px">Default</div><div class="cell" style="left:1590px;top:798px;width:153px"></div>
<div class="cell" style="left:1034px;top:828px;width:98px">1</div><div class="cell" style="left:1134px;top:828px;width:98px">10</div><div class="cell" style="left:1234px;top:828px;width:176px"></div><div class="cell" style="left:1412px;top:828px;width:176px">Default</div><div class="cell" style="left:1590px;top:828px;width:153px"></div>

<div style="left:1745px;top:531px;width:10px;height:203px;background:#3f4d5c;border-radius:4px"></div>
<div style="left:1033px;top:859px;width:568px;height:10px;background:#3f4d5c;border-radius:5px"></div>

<div style="left:1033px;top:886px;width:17px;height:17px;background:#dde1e8;border-radius:4px"></div>
<div class="t" style="left:1056px;top:887px;color:#d6dde4;letter-spacing:.12px">Number of <u style="text-decoration-thickness:1px">a</u>udio outputs to show in Mixer:</div>
<div style="left:1317px;top:877px;width:80px;height:34px;border:2px solid #14171b;border-radius:6px;background:#1f252a;color:#656c74;padding:9px 6px;line-height:14px">1</div>
<div style="left:1022px;top:920px;width:744px;height:1px;background:#14171b"></div>
<div class="btn t c" style="left:1034px;top:934px;width:217px;height:34px;line-height:36px;font-weight:bold;font-size:13px;letter-spacing:.1px;color:#dfe5ec">Save Endpoint Configuration...</div>
<div style="left:1563px;top:940px;width:22px;height:22px;background:#0a7fe0;border-radius:50%;color:#fff;font:bold 15px/22px 'Liberation Sans';text-align:center">?</div>
<div class="btn t c" style="left:1604px;top:934px;width:72px;height:34px;line-height:32px;border:2px solid #2a6ea8;font-size:14px">OK</div>
<div class="btn t c" style="left:1682px;top:934px;width:72px;height:34px;line-height:36px;font-size:14px">Cancel</div>

</body></html>
